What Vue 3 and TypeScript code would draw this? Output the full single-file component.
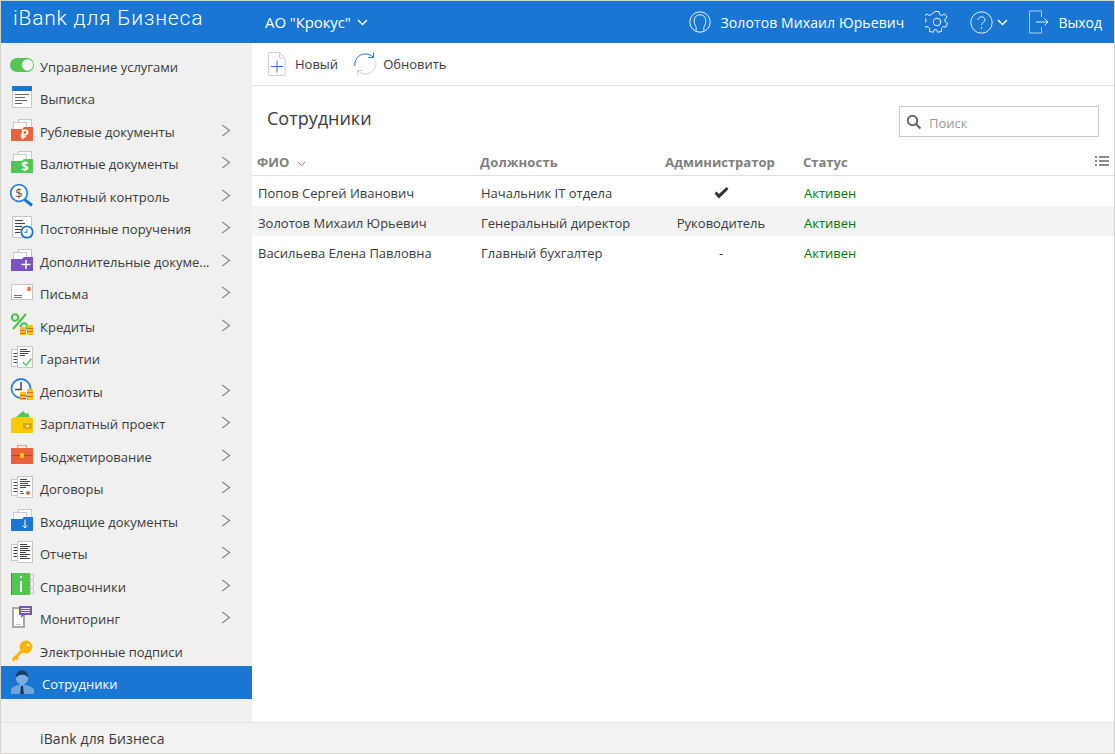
<script setup lang="ts">
interface MenuItem { label: string; icon: string; arrow: boolean; active?: boolean }
interface Employee { name: string; role: string; admin: string; status: string }

const menu: MenuItem[] = [
  { label: 'Управление услугами', icon: 'toggle', arrow: false },
  { label: 'Выписка', icon: 'statement', arrow: false },
  { label: 'Рублевые документы', icon: 'rub', arrow: true },
  { label: 'Валютные документы', icon: 'usd', arrow: true },
  { label: 'Валютный контроль', icon: 'control', arrow: true },
  { label: 'Постоянные поручения', icon: 'standing', arrow: true },
  { label: 'Дополнительные докуме...', icon: 'extra', arrow: true },
  { label: 'Письма', icon: 'mail', arrow: true },
  { label: 'Кредиты', icon: 'credit', arrow: true },
  { label: 'Гарантии', icon: 'guarantee', arrow: false },
  { label: 'Депозиты', icon: 'deposit', arrow: true },
  { label: 'Зарплатный проект', icon: 'wallet', arrow: true },
  { label: 'Бюджетирование', icon: 'budget', arrow: true },
  { label: 'Договоры', icon: 'contract', arrow: true },
  { label: 'Входящие документы', icon: 'incoming', arrow: true },
  { label: 'Отчеты', icon: 'report', arrow: true },
  { label: 'Справочники', icon: 'directory', arrow: true },
  { label: 'Мониторинг', icon: 'monitor', arrow: true },
  { label: 'Электронные подписи', icon: 'key', arrow: false },
  { label: 'Сотрудники', icon: 'person', arrow: false, active: true }
]

const employees: Employee[] = [
  { name: 'Попов Сергей Иванович', role: 'Начальник IT отдела', admin: 'check', status: 'Активен' },
  { name: 'Золотов Михаил Юрьевич', role: 'Генеральный директор', admin: 'Руководитель', status: 'Активен' },
  { name: 'Васильева Елена Павловна', role: 'Главный бухгалтер', admin: '-', status: 'Активен' }
]
</script>

<template>
  <div class="app">
    <header class="top">
      <div class="brand">iBank для Бизнеса</div>
      <div class="org">
        <span>АО "Крокус"</span>
        <svg class="chev-down" width="11" height="7" viewBox="0 0 11 7"><path d="M1 1l4.500 4.500L10 1" /></svg>
      </div>
      <div class="top-right">
        <svg class="top-ic user-ic" width="22" height="22" viewBox="0 0 22 22">
          <circle cx="11" cy="11" r="10.200" />
          <path d="M7.200 19.500v-3c0-1-2-2.500-2-7C5.200 6 7.500 3.800 11 3.800S16.800 6 16.800 9.500c0 4.500-2 6-2 7v3" />
        </svg>
        <span class="user-name">Золотов Михаил Юрьевич</span>
        <svg class="top-ic gear-ic" width="24" height="24" viewBox="0 0 24 24">
          <circle cx="12" cy="12" r="3.800" />
          <path d="M10 1.500h4l.6 3 2.200 1 2.700-1.600 2.600 3.400-2.200 2 .2 2.500 2.400 1.500-1.600 3.900-2.900-.6-1.800 1.800.5 2.900-4 1-1.200-2.700h-2l-1.200 2.700-4-1 .5-2.900-1.800-1.800-2.900.6-1.600-3.900 2.400-1.500.2-2.500-2.200-2 2.600-3.400 2.700 1.600 2.200-1z" />
        </svg>
        <svg class="top-ic help-ic" width="23" height="23" viewBox="0 0 23 23">
          <circle cx="11.500" cy="11.500" r="10.700" />
          <path d="M8 9c0-2 1.500-3.200 3.500-3.200S15 7 15 8.800c0 2.500-3.500 2.700-3.500 5.200" />
          <path d="M11.500 16v1.800" />
        </svg>
        <svg class="chev-down help-chev" width="11" height="7" viewBox="0 0 11 7"><path d="M1 1l4.500 4.500L10 1" /></svg>
        <svg class="top-ic exit-ic" width="20" height="24" viewBox="0 0 20 24">
          <path class="exit-door" d="M12.500 7V1H.6v22h11.900v-6" />
          <path d="M7 12h12M15.500 8.500L19 12l-3.500 3.500" />
        </svg>
        <span class="exit-label">Выход</span>
      </div>
    </header>

    <div class="middle">
      <nav class="side">
        <div v-for="item in menu" :key="item.label" class="item" :class="{ active: item.active }">
          <svg class="mi" width="24" height="24" viewBox="0 0 24 24">
            <template v-if="item.icon === 'toggle'">
              <rect x="0" y="5" width="24" height="14" rx="7" fill="#53c653" />
              <circle cx="17.500" cy="12" r="5.700" fill="#f4f4f4" />
            </template>
            <template v-else-if="item.icon === 'statement'">
              <rect x="2.500" y="1.500" width="19" height="21" fill="#fff" stroke="#c8c8c8" />
              <rect x="2" y="1" width="20" height="5" fill="#1976d2" />
              <path d="M5 9.500h14M5 12.500h10M5 15.500h12M5 18.500h7" stroke="#666" fill="none" />
            </template>
            <template v-else-if="['rub', 'usd', 'extra', 'incoming'].includes(item.icon)">
              <rect x="8.500" y="1.500" width="13" height="12" fill="#fff" stroke="#c8c8c8" />
              <rect x="3.500" y="4.500" width="13" height="10" fill="#fff" stroke="#c8c8c8" />
              <path d="M1 11H12L14 9H23V23H1Z" :fill="{ rub: '#e8623a', usd: '#50c850', extra: '#7b52c4', incoming: '#1976d2' }[item.icon]" />
              <text v-if="item.icon === 'rub'" x="15" y="21" class="glyph" fill="#fff">₽</text>
              <text v-if="item.icon === 'usd'" x="15" y="21" class="glyph" fill="#fff">$</text>
              <path v-if="item.icon === 'extra'" d="M11.500 16.500h9M16 12v9" stroke="#fff" stroke-width="1.500" />
              <path v-if="item.icon === 'incoming'" d="M15 11.500v8M12.800 17.500l2.200 2.500 2.200-2.500" stroke="#fff" fill="none" />
            </template>
            <template v-else-if="item.icon === 'control'">
              <path d="M14 16l8 6.500" stroke="#1976d2" stroke-width="3" />
              <circle cx="9" cy="10" r="8.300" fill="#fff" stroke="#2b84dc" stroke-width="1.800" />
              <text x="9" y="14.500" class="glyph-thin" fill="#555">$</text>
            </template>
            <template v-else-if="item.icon === 'standing'">
              <rect x="2.500" y="1.500" width="19" height="21" fill="#fff" stroke="#c8c8c8" />
              <path d="M5 5.500h8M5 8.500h10M5 11.500h7M5 14.500h6M5 17.500h5" stroke="#444" fill="none" />
              <circle cx="17" cy="17" r="5.700" fill="#fff" stroke="#1976d2" stroke-width="1.800" />
              <path d="M17 14v3.300h-2.500" stroke="#1976d2" fill="none" />
            </template>
            <template v-else-if="item.icon === 'mail'">
              <rect x="1.500" y="4.500" width="21" height="15" fill="#fff" stroke="#c8c8c8" />
              <rect x="17.500" y="7" width="3" height="4" fill="#e8623a" />
              <path d="M4 15.500h8M4 17.500h8" stroke="#777" />
            </template>
            <template v-else-if="item.icon === 'credit'">
              <circle cx="5" cy="4.500" r="3.200" fill="none" stroke="#44c444" stroke-width="2" />
              <path d="M16 1L3 16" stroke="#44c444" stroke-width="2" />
              <circle cx="14" cy="13.500" r="3.200" fill="none" stroke="#44c444" stroke-width="2" />
              <rect x="10" y="14" width="6" height="8" fill="#ffc107" />
              <rect x="17" y="12" width="6" height="10" fill="#ffc107" />
              <path d="M10 17.500h6M10 20.500h6M17 15.500h6M17 18.500h6" stroke="#e8623a" />
            </template>
            <template v-else-if="item.icon === 'guarantee'">
              <rect x="1.500" y="4.500" width="14" height="17" fill="#fff" stroke="#c8c8c8" />
              <path d="M3.500 8.500h4M3.500 11.500h4M3.500 14.500h4M3.500 17.500h4" stroke="#444" />
              <rect x="7.500" y="1.500" width="15" height="21" fill="#fff" stroke="#c8c8c8" />
              <path d="M10 4.500h7M10 6.500h10M10 8.500h8M10 10.500h5" stroke="#444" />
              <path d="M13 17l3 3.500 5.500-7" stroke="#50c850" stroke-width="1.300" fill="none" />
            </template>
            <template v-else-if="item.icon === 'deposit'">
              <circle cx="11" cy="10.500" r="9.500" fill="#fff" stroke="#2b84dc" stroke-width="1.800" />
              <path d="M11 4v7.500H5" stroke="#444" stroke-width="1.500" fill="none" />
              <rect x="10" y="14" width="6" height="8" fill="#ffc107" />
              <rect x="17" y="11" width="6" height="11" fill="#ffc107" />
              <path d="M10 17.500h6M10 20.500h6M17 14.500h6M17 18.500h6" stroke="#e8623a" />
            </template>
            <template v-else-if="item.icon === 'wallet'">
              <path d="M5 8l8-7 3 3 2-1 2 5z" fill="#50c850" />
              <path d="M1 9l4-2h15v1h3v15H1z" fill="#ffc800" />
              <rect x="13" y="13" width="9" height="6" fill="#dfa800" />
              <rect x="16.500" y="15" width="2" height="2" fill="#fff" />
            </template>
            <template v-else-if="item.icon === 'budget'">
              <rect x="7.500" y="2.500" width="9" height="4" fill="none" stroke="#e8a080" />
              <rect x="1" y="5" width="22" height="16" fill="#e8623a" />
              <path d="M1 12.500h22" stroke="#b84a25" />
              <rect x="10" y="10" width="4" height="5" fill="#ffc107" />
            </template>
            <template v-else-if="item.icon === 'contract' || item.icon === 'report'">
              <rect x="1.500" y="4.500" width="14" height="16" fill="#fff" stroke="#c8c8c8" />
              <path d="M3.500 7.500h4M3.500 10.500h4M3.500 13.500h4M3.500 16.500h4" stroke="#444" />
              <rect x="7.500" y="1.500" width="15" height="21" fill="#fff" stroke="#c8c8c8" />
              <path d="M10 4.500h7M10 6.500h10M10 8.500h8M10 10.500h10M10 12.500h6" stroke="#444" />
              <template v-if="item.icon === 'contract'">
                <circle cx="18" cy="18" r="2" fill="#e8623a" />
                <path d="M10 16.500h3M10 18.500h4" stroke="#666" />
              </template>
              <path v-else d="M10 14.500h10M10 16.500h7M10 18.500h10" stroke="#444" />
            </template>
            <template v-else-if="item.icon === 'directory'">
              <rect x="20.500" y="1.500" width="3" height="5" fill="#f6f6f6" stroke="#c8c8c8" />
              <rect x="20.500" y="8.500" width="3" height="5" fill="#f6f6f6" stroke="#c8c8c8" />
              <rect x="20.500" y="15.500" width="3" height="5" fill="#f6f6f6" stroke="#c8c8c8" />
              <rect x="1" y="0" width="19" height="22" fill="#50c850" />
              <rect x="1" y="0" width="1" height="22" fill="#2e9e2e" />
              <rect x="10" y="3" width="2" height="2" fill="#fff" />
              <rect x="10" y="8" width="2" height="11" fill="#fff" />
            </template>
            <template v-else-if="item.icon === 'monitor'">
              <rect x="3" y="3" width="11" height="19" fill="#fff" stroke="#a8a8a8" stroke-width="2" />
              <path d="M6 19.500h5" stroke="#c8c8c8" />
              <path d="M9 1h13v9H14l-3 3v-3H9z" fill="#7b52c4" />
              <path d="M11 3.500h9M11 5.500h9M11 7.500h9" stroke="#e6defa" />
            </template>
            <template v-else-if="item.icon === 'key'">
              <circle cx="16" cy="9" r="6.500" fill="#f7b500" />
              <path d="M12 13L3 21.500M5.500 19l2.500 2M3 21.500l1.500 1" stroke="#f7b500" stroke-width="3" fill="none" />
              <circle cx="18" cy="7" r="1.500" fill="#f8e7a8" />
            </template>
            <template v-else-if="item.icon === 'person'">
              <path d="M1 24v-4c0-2.500 4-4 7-5h8c3 1 8 2.500 8 5v4z" fill="#6fa5dc" />
              <rect x="9.500" y="11" width="5" height="6" fill="#6fa5dc" />
              <circle cx="12" cy="8" r="6.300" fill="#7db0e2" />
              <path d="M5.500 8c0-5 3-7.500 6.500-7.500S18.500 3 18.500 8c-2-2.500-3-3-6.500-3.200C9 5 7.500 6 5.500 8z" fill="#173f6b" />
              <path d="M11 16h2l.8 8h-3.600z" fill="#1b3556" />
            </template>
          </svg>
          <span class="lbl">{{ item.label }}</span>
          <svg v-if="item.arrow" class="arrow" width="10" height="13" viewBox="0 0 10 13"><path d="M1.200 1l7.300 5.500L1.200 12" /></svg>
        </div>
      </nav>

      <main class="content">
        <div class="toolbar">
          <button class="tool new-tool">
            <svg width="18" height="24" viewBox="0 0 18 24">
              <path d="M.5.500h11l5.500 5.500v17.500H.5z" fill="#fff" stroke="#d0d0d0" />
              <path d="M11.500.5v5.500H17" fill="none" stroke="#d0d0d0" />
              <path d="M3 14.500h12M9 8.500v12" stroke="#1976d2" fill="none" />
            </svg>
            <span>Новый</span>
          </button>
          <button class="tool refresh-tool">
            <svg width="23" height="24" viewBox="0 0 23 24">
              <path d="M.8 14C0 6 7 0 15 2.500c1.500.5 3 1.500 4 2.500" fill="none" stroke="#1976d2" />
              <path d="M14.500 5.500H19.500V.5" fill="none" stroke="#1976d2" />
              <path d="M22 10c1 8-7 14-14 11.500-1.500-.5-3-1.500-4-2.500" fill="none" stroke="#d0d0d0" />
              <path d="M8.500 18.500H3.500V23.500" fill="none" stroke="#d0d0d0" />
            </svg>
            <span>Обновить</span>
          </button>
        </div>

        <div class="title-row">
          <h1>Сотрудники</h1>
          <label class="search">
            <svg width="16" height="16" viewBox="0 0 16 16">
              <circle cx="6.500" cy="6.500" r="4.700" fill="none" stroke="#666" stroke-width="2" />
              <path d="M10 10l4.500 4.500" stroke="#666" stroke-width="2.200" />
            </svg>
            <span class="placeholder">Поиск</span>
          </label>
        </div>

        <div class="grid-row grid-head">
          <div class="c1">ФИО
            <svg class="sort" width="9" height="6" viewBox="0 0 9 6"><path d="M.7.700l3.800 3.800L8.300.7" /></svg>
          </div>
          <div class="c2">Должность</div>
          <div class="c3">Администратор</div>
          <div class="c4">Статус</div>
          <svg class="cols" width="14" height="10" viewBox="0 0 14 10">
            <path d="M0 1h2M4 1h10M0 5h2M4 5h10M0 9h2M4 9h10" stroke="#8a8a8a" stroke-width="2" />
          </svg>
        </div>
        <div v-for="e in employees" :key="e.name" class="grid-row grid-body">
          <div class="c1">{{ e.name }}</div>
          <div class="c2">{{ e.role }}</div>
          <div class="c3">
            <svg v-if="e.admin === 'check'" class="tick" width="15" height="12" viewBox="0 0 15 12"><path d="M.5 6.500l2-2 2.500 2.500 7.500-7 2 2-9.500 9.500z" fill="#333" /></svg>
            <template v-else>{{ e.admin }}</template>
          </div>
          <div class="c4 ok">{{ e.status }}</div>
        </div>
      </main>
    </div>

    <footer class="foot">iBank для Бизнеса</footer>
  </div>
</template>

<style>
html, body { margin: 0; height: 100%; overflow: hidden; }
</style>

<style scoped>
.app {
  width: 1115px;
  height: 754px;
  box-sizing: border-box;
  border: 1px solid #d6d2ca;
  display: flex;
  flex-direction: column;
  font-family: "Open Sans", "Liberation Sans", sans-serif;
  font-size: 13px;
  color: #3b3b3b;
  background: #fff;
  overflow: hidden;
}
.top {
  height: 42px;
  flex: none;
  background: #1976d2;
  color: #fff;
  display: flex;
  align-items: center;
}
.brand {
  width: 251px;
  box-sizing: border-box;
  padding-left: 12px;
  font-family: Roboto, "Liberation Sans", sans-serif;
  font-weight: 300;
  font-size: 21px;
  letter-spacing: .8px;
  margin-bottom: 9px;
}
.org {
  display: flex;
  align-items: center;
  gap: 6px;
  margin-left: 13px;
  font-size: 15px;
  letter-spacing: -.1px;
}
.chev-down { fill: none; stroke: #fff; stroke-width: 1.500; }
.top-right {
  margin-left: auto;
  display: flex;
  align-items: center;
  padding-right: 12px;
  font-size: 14px;
}
.top-ic { fill: none; stroke: #fff; stroke-width: 1; opacity: .9; }
.user-name { margin-left: 10px; letter-spacing: .1px; }
.gear-ic { margin-left: 21px; }
.help-ic { margin-left: 21px; }
.help-chev { margin-left: 4px; }
.exit-ic { margin-left: 21px; }
.exit-door { stroke: #bcd8f4; }
.exit-label { margin-left: 9px; }

.middle { flex: 1; min-height: 0; display: flex; }
.side {
  width: 251px;
  flex: none;
  background: #f0f0f0;
  padding-top: 5.500px;
  box-sizing: border-box;
}
.item {
  height: 32.500px;
  display: flex;
  align-items: center;
  position: relative;
}
.mi { flex: none; margin-left: 9px; }
.lbl { margin-left: 6px; white-space: nowrap; padding-top: 4px; }
.arrow { position: absolute; left: 220px; top: 10px; fill: none; stroke: #8c8c8c; stroke-width: 1.300; }
.item.active { background: #1976d2; color: #fff; }
.item.active .lbl { margin-left: 8px; }
.glyph { font: 700 13px "Open Sans", sans-serif; text-anchor: middle; }
.glyph-thin { font: 400 13px "Open Sans", sans-serif; text-anchor: middle; }

.content { flex: 1; min-width: 0; }
.toolbar {
  height: 43px;
  box-sizing: border-box;
  border-bottom: 1px solid #e0e0e0;
  display: flex;
  align-items: center;
  padding-left: 16px;
}
.tool {
  display: flex;
  align-items: center;
  border: 0;
  padding: 0;
  background: none;
  color: inherit;
  font: inherit;
}
.new-tool span { margin-left: 9px; }
.refresh-tool { margin-left: 16px; }
.refresh-tool span { margin-left: 6px; }
.title-row {
  height: 64px;
  box-sizing: border-box;
  display: flex;
  align-items: flex-start;
  padding: 20px 15px 0;
  justify-content: space-between;
}
.title-row h1 { margin: 0; font-size: 18px; font-weight: 400; color: inherit; }
.search {
  width: 200px;
  height: 31px;
  box-sizing: border-box;
  border: 1px solid #c8c8c8;
  display: flex;
  align-items: center;
  padding-left: 6px;
  gap: 7px;
  color: #999;
}
.placeholder { padding-top: 2px; }
.grid-row {
  display: grid;
  grid-template-columns: 228px 180px 120px 1fr;
  align-items: center;
  position: relative;
}
.grid-head {
  height: 26px;
  box-sizing: border-box;
  padding-bottom: 2px;
  border-bottom: 1px solid #e0e0e0;
  font-weight: 700;
  color: #808080;
}
.grid-head .c1 { padding-left: 5px; }
.grid-head .c2 { padding-left: 0; letter-spacing: .2px; }
.grid-head .c3 { padding-left: 0; }
.grid-head .c4 { padding-left: 23px; }
.grid-body { height: 30px; box-sizing: border-box; padding-top: 4px; }
.grid-body:nth-of-type(5) { background: #f3f3f3; }
.c1 { padding-left: 6px; }
.c2 { padding-left: 1px; }
.c3 { text-align: center; padding-left: 2px; }
.c4 { padding-left: 24px; }
.ok { color: #007a00; }
.tick { display: block; margin: 0 auto; }
.sort { fill: none; stroke: #808080; stroke-width: 1; margin-left: 4px; }
.cols { position: absolute; right: 5px; top: 6px; }
.foot {
  height: 31px;
  flex: none;
  box-sizing: border-box;
  border-top: 1px solid #e4e4e4;
  background: #f2f2f2;
  padding-left: 39px;
  display: flex;
  align-items: center;
  font-size: 14px;
  letter-spacing: .1px;
}
</style>
